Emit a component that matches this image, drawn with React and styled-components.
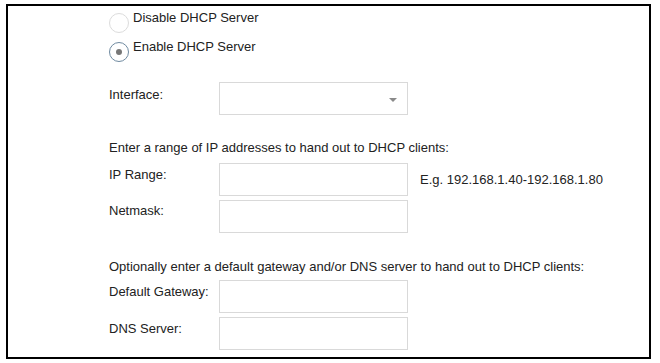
import styled, { createGlobalStyle } from "styled-components"

const GlobalStyle = createGlobalStyle`
    html, body {
        margin: 0;
        padding: 0;
        background: #fff;
    }
    body {
        font-family: "Liberation Sans", Arial, sans-serif;
        font-size: 13px;
        color: #222;
    }
`

const App = () => {
    return (
        <>
            <GlobalStyle />
            <Frame>
                <RadioGroup>
                    <RadioRow>
                        <Radio />
                        <RadioText>Disable DHCP Server</RadioText>
                    </RadioRow>
                    <RadioRow>
                        <Radio checked />
                        <RadioText>Enable DHCP Server</RadioText>
                    </RadioRow>
                </RadioGroup>

                <FieldRow $top={14}>
                    <Label $pad={5}>Interface:</Label>
                    <Select>
                        <Arrow />
                    </Select>
                </FieldRow>

                <Note $top={25}>Enter a range of IP addresses to hand out to DHCP clients:</Note>
                <Fields>
                    <FieldRow>
                        <Label>IP Range:</Label>
                        <Input />
                        <Hint>E.g. 192.168.1.40-192.168.1.80</Hint>
                    </FieldRow>
                    <FieldRow>
                        <Label $pad={3}>Netmask:</Label>
                        <Input />
                    </FieldRow>
                </Fields>

                <Note $top={26}>Optionally enter a default gateway and/or DNS server to hand out to DHCP clients:</Note>
                <Fields $top={6}>
                    <FieldRow>
                        <Label>Default Gateway:</Label>
                        <Input />
                    </FieldRow>
                    <FieldRow>
                        <Label>DNS Server:</Label>
                        <Input />
                    </FieldRow>
                </Fields>
            </Frame>
        </>
    )
}

const Frame = styled.section`
    box-sizing: border-box;
    margin: 4px 0 0 6px;
    width: 645px;
    height: 355px;
    border: 2px solid #000;
    padding: 4px 0 0 101px;
    display: flex;
    flex-direction: column;
`

const RadioGroup = styled.div`
    display: flex;
    flex-direction: column;
`

const RadioRow = styled.label`
    display: flex;
    align-items: flex-start;
    height: 29px;
`

const Radio = styled.span`
    box-sizing: border-box;
    width: 20px;
    height: 20px;
    margin-top: 3px;
    margin-right: 4px;
    border-radius: 50%;
    border: 1px solid ${(p) => (p.checked ? "#6f8aa0" : "#dcdcdc")};
    background: #fff;
    display: flex;
    align-items: center;
    justify-content: center;

    &::after {
        content: "";
        display: ${(p) => (p.checked ? "block" : "none")};
        width: 6px;
        height: 6px;
        border-radius: 50%;
        background: #777;
    }
`

const RadioText = styled.span`
    line-height: 15px;
`

const Fields = styled.div`
    display: flex;
    flex-direction: column;
    gap: 4px;
    margin-top: ${(p) => p.$top || 8}px;
`

const FieldRow = styled.div`
    display: flex;
    align-items: flex-start;
    margin-top: ${(p) => p.$top || 0}px;
`

const Label = styled.span`
    width: 110px;
    line-height: 15px;
    padding-top: ${(p) => (p.$pad !== undefined ? p.$pad : 4)}px;
`

const Input = styled.div`
    box-sizing: border-box;
    width: 189px;
    height: 33px;
    border: 1px solid #d9d9d9;
    background: #fff;
`

const Select = styled(Input)`
    display: flex;
    align-items: center;
    justify-content: flex-end;
    padding-right: 10px;
`

const Arrow = styled.span`
    width: 0;
    height: 0;
    border-left: 4px solid transparent;
    border-right: 4px solid transparent;
    border-top: 4px solid #8a8a8a;
    margin-top: 2px;
`

const Hint = styled.span`
    align-self: center;
    margin-left: 12px;
    line-height: 15px;
`

const Note = styled.p`
    margin: ${(p) => p.$top}px 0 0;
    line-height: 15px;
`

export default App
